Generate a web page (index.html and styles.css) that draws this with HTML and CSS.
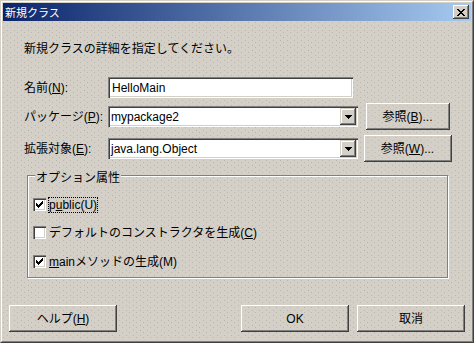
FILE: index.html
```html
<!DOCTYPE html>
<html lang="ja">
<head>
<meta charset="utf-8">
<title>新規クラス</title>
<link rel="stylesheet" href="styles.css">
</head>
<body>
<div class="window">
  <div class="frame">
    <div class="titlebar">
      <span class="title">新規クラス</span>
      <span class="close-btn"><svg class="close-x" width="8" height="7" viewBox="0 0 8 7"><path fill="#000" d="M0 0h2v1H0z M6 0h2v1H6z M1 1h2v1H1z M5 1h2v1H5z M2 2h4v1H2z M3 3h2v1H3z M2 4h4v1H2z M1 5h2v1H1z M5 5h2v1H5z M0 6h2v1H0z M6 6h2v1H6z"/></svg></span>
    </div>
    <div class="content">
      <p class="intro">新規クラスの詳細を指定してください。</p>
      <div class="form">
        <div class="row row-short">
          <span class="lbl">名前(<u>N</u>):</span>
          <div class="textfield">HelloMain</div>
        </div>
        <div class="row">
          <span class="lbl">パッケージ(<u>P</u>):</span>
          <div class="combo">
            <span class="combo-text">mypackage2</span>
            <span class="combo-btn"><svg width="7" height="4" viewBox="0 0 7 4"><path fill="#000" d="M0 0h7v1H0z M1 1h5v1H1z M2 2h3v1H2z M3 3h1v1H3z"/></svg></span>
          </div>
          <div class="btn-cell"><button class="btn btn-browse">参照(<u>B</u>)...</button></div>
        </div>
        <div class="row">
          <span class="lbl">拡張対象(<u>E</u>):</span>
          <div class="combo">
            <span class="combo-text">java.lang.Object</span>
            <span class="combo-btn"><svg width="7" height="4" viewBox="0 0 7 4"><path fill="#000" d="M0 0h7v1H0z M1 1h5v1H1z M2 2h3v1H2z M3 3h1v1H3z"/></svg></span>
          </div>
          <div class="btn-cell"><button class="btn btn-browse-wide">参照(<u>W</u>)...</button></div>
        </div>
      </div>
      <fieldset class="options">
        <legend class="options-title">オプション属性</legend>
        <div class="check-row">
          <span class="checkbox"><svg width="7" height="7" viewBox="0 0 7 7"><path fill="#000" d="M6 0h1v1H6z M5 1h2v1H5z M0 2h1v1H0z M4 2h3v1H4z M0 3h2v1H0z M3 3h3v1H3z M0 4h5v1H0z M1 5h3v1H1z M2 6h1v1H2z"/></svg></span>
          <span class="check-label focused">p<u>u</u>blic(U)</span>
        </div>
        <div class="check-row">
          <span class="checkbox"></span>
          <span class="check-label">デフォルトのコンストラクタを生成(<u>C</u>)</span>
        </div>
        <div class="check-row check-row-last">
          <span class="checkbox"><svg width="7" height="7" viewBox="0 0 7 7"><path fill="#000" d="M6 0h1v1H6z M5 1h2v1H5z M0 2h1v1H0z M4 2h3v1H4z M0 3h2v1H0z M3 3h3v1H3z M0 4h5v1H0z M1 5h3v1H1z M2 6h1v1H2z"/></svg></span>
          <span class="check-label"><u>m</u>ainメソッドの生成(M)</span>
        </div>
      </fieldset>
      <div class="actions">
        <button class="btn btn-wide">ヘルプ(<u>H</u>)</button>
        <div class="actions-right">
          <button class="btn btn-ok">OK</button>
          <button class="btn btn-wide">取消</button>
        </div>
      </div>
    </div>
  </div>
</div>
</body>
</html>
```
FILE: styles.css
```css
* {
  box-sizing: border-box;
  margin: 0;
  padding: 0;
}

html, body {
  width: 474px;
  height: 343px;
  overflow: hidden;
}

body {
  font-family: "Liberation Sans", "Noto Sans CJK JP", sans-serif;
  font-size: 12px;
  color: #000;
  background: #d4d0c8;
}

u {
  text-decoration: underline;
  text-underline-offset: 1px;
}

.window {
  width: 474px;
  height: 343px;
  border: 1px solid;
  border-color: #d4d0c8 #404040 #404040 #d4d0c8;
  background: #d4d0c8;
}

.frame {
  height: 100%;
  border: 1px solid;
  border-color: #fff #808080 #808080 #fff;
  padding: 1px;
  display: flex;
  flex-direction: column;
}

.titlebar {
  flex: none;
  height: 18px;
  display: flex;
  align-items: center;
  justify-content: space-between;
  padding: 0 2px 0 2px;
  background: linear-gradient(to right, #0a246a, #a6caf0);
}

.title {
  color: #fff;
  font-family: "Noto Sans CJK JP", sans-serif;
  font-size: 11px;
  line-height: 14px;
}

.close-btn {
  width: 16px;
  height: 14px;
  display: flex;
  align-items: center;
  justify-content: center;
  background: #d4d0c8;
  box-shadow: inset -1px -1px #404040, inset 1px 1px #fff, inset -2px -2px #808080, inset 2px 2px #d4d0c8;
}

.close-x {
  display: block;
}

.content,
.btn,
.options-title {
  background-color: #d4d0c8;
  background-image:
    conic-gradient(from 270deg at 1px 1px, #bab6ae 25%, transparent 0),
    conic-gradient(from 270deg at 1px 1px, #bab6ae 25%, transparent 0);
  background-size: 7px 5px, 7px 5px;
  background-position: 0 0, 3px 2px;
  background-attachment: fixed;
}

.content {
  flex: 1;
  padding-top: 19px;
}

.intro {
  margin-left: 21px;
  line-height: 16px;
  font-family: "Noto Sans CJK JP", sans-serif;
}

.form {
  margin: 21px 0 0 21px;
  display: flex;
  flex-direction: column;
  gap: 5px;
}

.row {
  height: 27px;
  display: flex;
  align-items: center;
}

.row-short {
  height: 21px;
}

.lbl {
  flex: none;
  width: 84px;
  line-height: 16px;
  white-space: nowrap;
}

.textfield,
.combo {
  height: 21px;
  background: #fff;
  box-shadow: inset 1px 1px #808080, inset 2px 2px #404040, inset -1px -1px #fff, inset -2px -2px #d4d0c8;
  display: flex;
  align-items: center;
}

.textfield {
  width: 245px;
  padding-left: 4px;
}

.combo {
  width: 250px;
  padding: 2px;
  justify-content: space-between;
}

.combo-text {
  padding-left: 1px;
}

.combo-btn {
  width: 16px;
  height: 17px;
  display: flex;
  align-items: center;
  justify-content: center;
  background: #d4d0c8;
  box-shadow: inset -1px -1px #404040, inset 1px 1px #d4d0c8, inset -2px -2px #808080, inset 2px 2px #fff;
}

.combo-btn svg {
  display: block;
}

.btn-cell {
  width: 99px;
  display: flex;
  justify-content: center;
}

.btn {
  height: 27px;
  border: none;
  font-family: "Liberation Sans", "Noto Sans CJK JP", sans-serif;
  font-size: 12px;
  color: #000;
  line-height: 16px;
  display: flex;
  align-items: center;
  justify-content: center;
  box-shadow: inset -1px -1px #404040, inset 1px 1px #fff, inset -2px -2px #808080, inset 2px 2px #d4d0c8;
}

.btn-browse {
  width: 84px;
}

.btn-browse-wide {
  width: 88px;
}

.btn-wide {
  width: 108px;
}

.btn-ok {
  width: 108px;
}

.options {
  margin: 5px 0 0 24px;
  width: 421px;
  height: 111px;
  min-width: 0;
  border: 1px solid #808080;
  box-shadow: inset 1px 1px #fff, 1px 1px #fff;
  padding: 7px 0 0 5px;
}

.options-title {
  margin-left: 2px;
  padding: 3px 1px 0;
  line-height: 14px;
  font-family: "Noto Sans CJK JP", sans-serif;
}

.check-row {
  height: 28px;
  display: flex;
  align-items: flex-start;
  gap: 3px;
}

.check-row-last {
  margin-top: 1px;
}

.checkbox {
  margin-top: 7px;
  width: 13px;
  height: 13px;
  flex: none;
  background: #fff;
  box-shadow: inset 1px 1px #808080, inset 2px 2px #404040, inset -1px -1px #fff, inset -2px -2px #d4d0c8;
  display: flex;
  align-items: center;
  justify-content: center;
}

.checkbox svg {
  display: block;
}

.check-label {
  margin-top: 7px;
  line-height: 14px;
  white-space: nowrap;
}

.focused {
  outline: 1px dotted #000;
}

.actions {
  margin-top: 27px;
  padding: 0 6px;
  display: flex;
  justify-content: space-between;
}

.actions-right {
  display: flex;
  gap: 8px;
}
```
